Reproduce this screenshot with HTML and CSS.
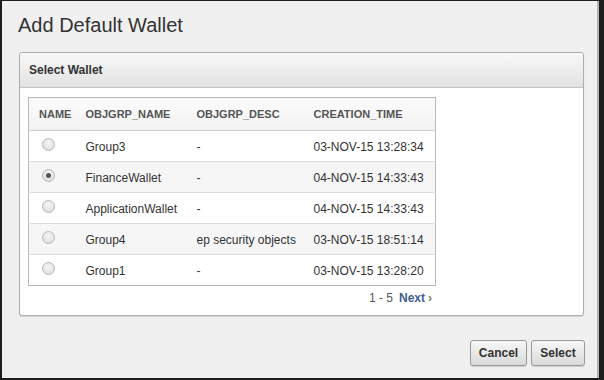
FILE: index.html
```html
<!DOCTYPE html>
<html>
<head>
<meta charset="utf-8">
<link rel="stylesheet" href="styles.css">
</head>
<body>
<div class="dialog">
  <h1 class="title">Add Default Wallet</h1>
  <div class="panel">
    <div class="panel-head">Select Wallet</div>
    <div class="panel-body">
      <table class="grid">
        <colgroup>
          <col class="c1"><col class="c2"><col class="c3"><col class="c4">
        </colgroup>
        <thead>
          <tr><th>NAME</th><th>OBJGRP_NAME</th><th>OBJGRP_DESC</th><th>CREATION_TIME</th></tr>
        </thead>
        <tbody>
          <tr><td><span class="radio"></span></td><td>Group3</td><td>-</td><td>03-NOV-15 13:28:34</td></tr>
          <tr class="alt"><td><span class="radio on"></span></td><td>FinanceWallet</td><td>-</td><td>04-NOV-15 14:33:43</td></tr>
          <tr><td><span class="radio"></span></td><td>ApplicationWallet</td><td>-</td><td>04-NOV-15 14:33:43</td></tr>
          <tr class="alt"><td><span class="radio"></span></td><td>Group4</td><td>ep security objects</td><td>03-NOV-15 18:51:14</td></tr>
          <tr><td><span class="radio"></span></td><td>Group1</td><td>-</td><td>03-NOV-15 13:28:20</td></tr>
        </tbody>
      </table>
      <div class="pager"><span class="range">1 - 5</span><span class="next">Next</span><span class="chev">&#8250;</span></div>
    </div>
  </div>
  <div class="actions">
    <button class="btn cancel">Cancel</button>
    <button class="btn select">Select</button>
  </div>
</div>
</body>
</html>
```
FILE: styles.css
```css
html, body {
  margin: 0;
  padding: 0;
  background: #1e1e1e;
}
body {
  width: 604px;
  height: 380px;
  overflow: hidden;
  font-family: "Liberation Sans", Arial, sans-serif;
  color: #333;
}
.dialog {
  box-sizing: border-box;
  margin: 1px 0 0 2px;
  width: 597px;
  height: 377px;
  background: #f0f0f0;
  border-right: 2px solid #b4b4b4;
  padding: 12px 14px 0 17px;
}
.title {
  margin: 0 0 0 -1px;
  font-size: 20px;
  font-weight: normal;
  line-height: 24px;
  color: #333;
}
.panel {
  margin-top: 15px;
  width: 565px;
  box-sizing: border-box;
  border: 1px solid #adadad;
  border-radius: 3px;
  background: #fff;
  box-shadow: 0 1px 1px rgba(0,0,0,0.12);
}
.panel-head {
  height: 35px;
  box-sizing: border-box;
  border-bottom: 1px solid #c4c4c4;
  border-radius: 3px 3px 0 0;
  background: linear-gradient(#f8f8f8, #e2e2e2);
  padding-left: 9px;
  font-size: 12px;
  font-weight: bold;
  line-height: 35px;
  color: #333;
}
.panel-body {
  padding: 9px 8px 6px 8px;
}
.grid {
  width: 407px;
  table-layout: fixed;
  border-collapse: collapse;
  border: 1px solid #b9b9b9;
  font-size: 12px;
}
.c1 { width: 47px; }
.c2 { width: 111px; }
.c3 { width: 117px; }
.c4 { width: 132px; }
.grid th {
  height: 32px;
  padding: 0 0 0 10px;
  text-align: left;
  font-size: 11px;
  font-weight: bold;
  color: #555;
  background: linear-gradient(#fcfcfc, #f1f1f1);
  border-bottom: 1px solid #cfcfcf;
  white-space: nowrap;
}
.grid td {
  height: 31px;
  padding: 2px 0 0 10px;
  box-sizing: border-box;
  border-top: 1px solid #dcdcdc;
  color: #333;
  white-space: nowrap;
  vertical-align: middle;
}
.grid tbody tr:first-child td { border-top: 0; }
.grid tr.alt td { background: #f6f6f6; }
.radio {
  display: block;
  width: 11px;
  height: 11px;
  margin: -5px 0 0 3px;
  border: 1px solid #b8b8b8;
  border-radius: 50%;
  background: radial-gradient(circle at 50% 35%, #f6f6f6, #d9d9d9);
  box-sizing: content-box;
  position: relative;
}
.radio.on::after {
  content: "";
  position: absolute;
  left: 3px;
  top: 3px;
  width: 5px;
  height: 5px;
  border-radius: 50%;
  background: #555;
}
.pager {
  width: 407px;
  display: flex;
  justify-content: flex-end;
  align-items: center;
  height: 23px;
  padding-top: 1px;
  font-size: 12px;
  padding-right: 3px;
  box-sizing: border-box;
}
.range { color: #555; margin-right: 6px; }
.next { color: #3f5e8f; font-weight: bold; }
.chev { color: #777; font-weight: bold; margin-left: 3px; font-size: 12px; }
.actions {
  display: flex;
  justify-content: flex-end;
  gap: 4px;
  margin-top: 24px;
  width: 566px;
}
.btn {
  height: 26px;
  box-sizing: border-box;
  border: 1px solid #9a9a9a;
  border-radius: 3px;
  background: linear-gradient(#f7f7f7, #dadada);
  font-family: "Liberation Sans", Arial, sans-serif;
  font-size: 12px;
  font-weight: bold;
  color: #333;
  padding: 0;
  box-shadow: 0 1px 1px rgba(0,0,0,0.15);
}
.cancel { width: 57px; }
.select { width: 54px; }
```
